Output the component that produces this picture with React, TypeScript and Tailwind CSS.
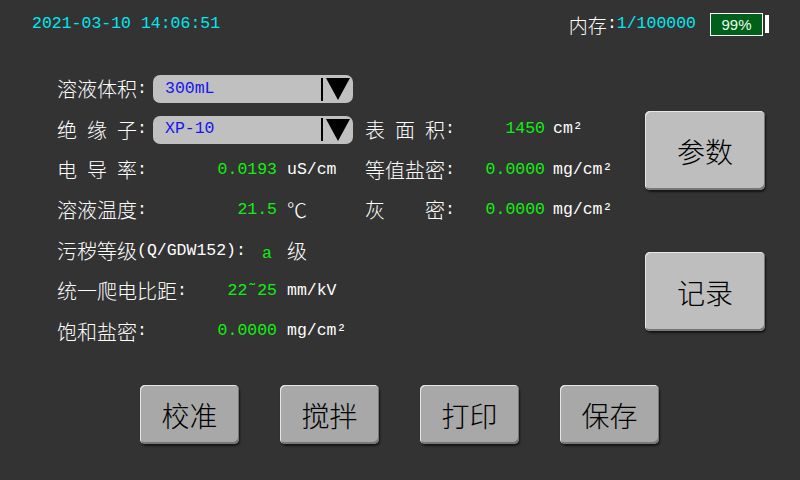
import React from "react";

const cjk = "font-['Noto_Sans_CJK_SC',sans-serif]";
const mono = "font-['Liberation_Mono','Noto_Sans_CJK_SC',monospace]";

function Spread({ chars, width = "w-[80px]" }: { chars: string[]; width?: string }) {
  return (
    <span className="flex items-center">
      <span className={`flex justify-between ${width}`}>
        {chars.map((c, i) => (
          <span key={i}>{c}</span>
        ))}
      </span>
      <span className={`${mono} text-[16.5px]`}>:</span>
    </span>
  );
}

function Label({ text }: { text: string }) {
  return (
    <span className="flex items-center">
      <span>{text}</span>
      <span className={`${mono} text-[16.5px]`}>:</span>
    </span>
  );
}

function Val({ children }: { children: React.ReactNode }) {
  return <span className={`${mono} text-[16.5px] text-[#10f010]`}>{children}</span>;
}

function Unit({ children, wide }: { children: React.ReactNode; wide?: boolean }) {
  return (
    <span className={`${mono} text-[16.5px] text-white ${wide ? "w-[88px] pl-[10px]" : "pl-[8px]"}`}>
      {children}
    </span>
  );
}

function Dropdown({ value }: { value: string }) {
  return (
    <div className="w-[200px] h-[28px] rounded-[7px] bg-[#c0c0c0] flex items-center pl-[12px]">
      <span className={`${mono} text-[16.5px] text-[#1414f0]`}>{value}</span>
      <span className="ml-auto w-[2px] h-[23px] bg-black" />
      <svg width="24" height="22" viewBox="0 0 24 22" className="ml-[3px] mr-[3px]">
        <polygon points="0,0 24,0 12,22" fill="#000" />
      </svg>
    </div>
  );
}

function Btn({ text, className }: { text: string; className: string }) {
  return (
    <div
      className={`${cjk} font-light flex items-center justify-center rounded-[5px] text-black text-[28px] shadow-[inset_1px_1px_0_#e6e6e6,inset_-1px_-2px_0_#777,1px_2px_2px_#151515] ${className}`}
    >
      {text}
    </div>
  );
}

export default function App() {
  const row = "flex items-center h-[40.4px]";
  return (
    <div className={`w-[800px] h-[480px] bg-[#333333] overflow-hidden text-white text-[20px] font-light leading-none ${cjk}`}>
      <div className="h-[44px] flex items-center pt-[4px] pl-[32px] pr-[31px]">
        <span className={`${mono} text-[16.5px] text-[#00e8f0]`}>2021-03-10 14:06:51</span>
        <div className="ml-auto flex items-center">
          <span className="text-[19px]">内存</span>
          <span className={`${mono} text-[16.5px]`}>:</span>
          <span className={`${mono} text-[16.5px] text-[#00e8f0]`}>1/100000</span>
          <div className="ml-[14px] w-[53px] h-[23px] border border-white bg-[#00601a] flex items-center justify-center">
            <span className="font-['Liberation_Sans',sans-serif] text-[15px] text-[#e8ffe8]">99%</span>
          </div>
          <span className="ml-[2px] w-[4px] h-[18px] bg-white" />
        </div>
      </div>

      <div className="flex h-[341px]">
        <div className="pl-[57px] pt-[25px] flex flex-col">
          <div className={row}>
            <span className="w-[96px]">
              <Label text="溶液体积" />
            </span>
            <Dropdown value="300mL" />
          </div>
          <div className={row}>
            <span className="w-[96px]">
              <Spread chars={["绝", "缘", "子"]} />
            </span>
            <Dropdown value="XP-10" />
            <div className="ml-[12px] w-[180px] flex justify-between items-center">
              <Spread chars={["表", "面", "积"]} />
              <Val>1450</Val>
            </div>
            <Unit>cm²</Unit>
          </div>
          <div className={row}>
            <div className="w-[220px] flex justify-between items-center">
              <Spread chars={["电", "导", "率"]} />
              <Val>0.0193</Val>
            </div>
            <Unit wide>uS/cm</Unit>
            <div className="w-[180px] flex justify-between items-center">
              <Label text="等值盐密" />
              <Val>0.0000</Val>
            </div>
            <Unit>mg/cm²</Unit>
          </div>
          <div className={row}>
            <div className="w-[220px] flex justify-between items-center">
              <Label text="溶液温度" />
              <Val>21.5</Val>
            </div>
            <span className="w-[88px] pl-[10px]">℃</span>
            <div className="w-[180px] flex justify-between items-center">
              <Spread chars={["灰", "密"]} />
              <Val>0.0000</Val>
            </div>
            <Unit>mg/cm²</Unit>
          </div>
          <div className={row}>
            <div className="w-[220px] flex justify-between items-center">
              <span className="flex items-center">
                <span>污秽等级</span>
                <span className={`${mono} text-[16.5px]`}>(Q/GDW152):</span>
              </span>
              <span className="pr-[5px]">
                <Val>a</Val>
              </span>
            </div>
            <span className="pl-[10px]">级</span>
          </div>
          <div className={row}>
            <div className="w-[220px] flex justify-between items-center">
              <Label text="统一爬电比距" />
              <Val>22˜25</Val>
            </div>
            <Unit wide>mm/kV</Unit>
          </div>
          <div className={row}>
            <div className="w-[220px] flex justify-between items-center">
              <Label text="饱和盐密" />
              <Val>0.0000</Val>
            </div>
            <Unit wide>mg/cm²</Unit>
          </div>
        </div>

        <div className="ml-auto mr-[35px] pt-[67px] flex flex-col gap-[62px]">
          <Btn text="参数" className="w-[120px] h-[79px] bg-[#bebebe]" />
          <Btn text="记录" className="w-[120px] h-[79px] bg-[#bebebe]" />
        </div>
      </div>

      <div className="flex gap-[41px] pl-[140px]">
        {["校准", "搅拌", "打印", "保存"].map((t) => (
          <Btn key={t} text={t} className="w-[99px] h-[59px] bg-[#a8a8a8]" />
        ))}
      </div>
    </div>
  );
}
